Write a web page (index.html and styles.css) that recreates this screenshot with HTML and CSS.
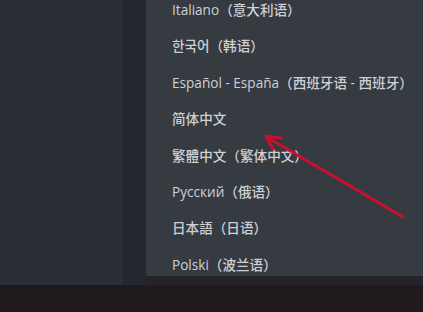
FILE: index.html
```html
<!DOCTYPE html>
<html lang="zh">
<head>
    <meta charset="UTF-8">
    <title>语言</title>
    <link rel="stylesheet" href="styles.css">
</head>
<body>
    <div class="screen">
        <div class="main">
            <div class="side"></div>
            <div class="gutter"></div>
            <div class="menu-wrap">
                <ul class="menu">
                    <li>Italiano（意大利语）</li>
                    <li>한국어（韩语）</li>
                    <li>Español - España（西班牙语 - 西班牙）</li>
                    <li>简体中文</li>
                    <li>繁體中文（繁体中文）</li>
                    <li>Русский（俄语）</li>
                    <li>日本語（日语）</li>
                    <li>Polski（波兰语）</li>
                </ul>
            </div>
        </div>
        <div class="footer"></div>

        <svg class="arrow" width="423" height="312" viewBox="0 0 423 312">
            <line x1="403" y1="217" x2="270" y2="139" stroke="#cc0f2c" stroke-width="3" stroke-linecap="round"/>
            <path d="M266 136 L281 138 M266 136 L273 149" stroke="#cc0f2c" stroke-width="3" stroke-linecap="round" fill="none"/>
        </svg>
    </div>
</body>
</html>
```

FILE: styles.css
```css
* {
    margin: 0;
    padding: 0;
    box-sizing: border-box;
}

body {
    font-family: "Open Sans", "Noto Sans CJK SC", "Noto Sans CJK KR", sans-serif;
    background: #1f1a1e;
    overflow: hidden;
}

.screen {
    position: relative;
    width: 423px;
    height: 312px;
    display: flex;
    flex-direction: column;
}

.main {
    display: flex;
    height: 285px;
}

.side {
    width: 123px;
    background: #2b2e36;
}

.gutter {
    width: 23px;
    background: #25272e;
}

.menu-wrap {
    flex: 1;
    background: #222429;
}

.menu {
    list-style: none;
    background: #363a41;
    padding-left: 26px;
    margin-top: -8px;
    height: 284px;
}

.menu li {
    height: 36.4px;
    line-height: 36px;
    font-size: 13.6px;
    font-weight: 500;
    color: #cdd1d6;
    white-space: nowrap;
}

.footer {
    flex: 1;
    background: #201a1e;
}

.arrow {
    position: absolute;
    left: 0;
    top: 0;
}
```
